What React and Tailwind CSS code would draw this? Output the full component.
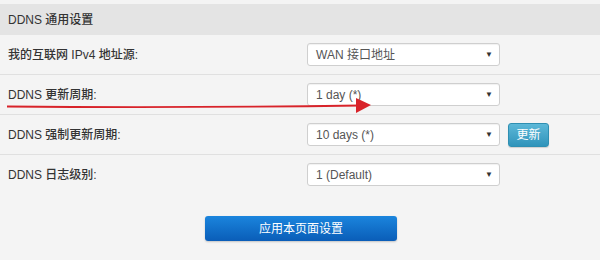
import React from 'react'

const font = { fontFamily: '"Liberation Sans", "Noto Sans CJK SC", sans-serif' }

function Select({ value }) {
  return (
    <div className="flex h-[23px] w-[193px] items-center justify-between rounded-[3px] border border-[#cfcfcf] bg-white pl-[8px] pr-[6px] shadow-[inset_0_1px_1px_rgba(0,0,0,0.06)]">
      <span className="text-[12px] text-[#555]">{value}</span>
      <span className="text-[8px] leading-none text-[#333]">▼</span>
    </div>
  )
}

function Row({ label, value, children }) {
  return (
    <div className="flex h-[40px] items-center border-b border-[#e0e0e0] pl-[8px]">
      <div className="w-[299px] text-[12px] font-medium text-[#333]">{label}</div>
      <Select value={value} />
      {children}
    </div>
  )
}

export default function App() {
  return (
    <div className="relative h-[260px] w-[600px] overflow-hidden bg-[#f4f4f4] pt-[4px]" style={font}>
      <div className="flex h-[31px] items-center bg-[#e4e4e4] pl-[8px] text-[12px] font-medium text-[#333]">
        DDNS 通用设置
      </div>

      <Row label="我的互联网 IPv4 地址源:" value="WAN 接口地址" />
      <Row label="DDNS 更新周期:" value="1 day (*)" />
      <Row label="DDNS 强制更新周期:" value="10 days (*)">
        <button className="ml-[8px] h-[24px] w-[41px] rounded-[3px] border border-[#2f8fb2] bg-gradient-to-b from-[#5cb8d8] to-[#2f94bb] text-[12px] text-white shadow-[0_1px_1px_rgba(0,0,0,0.15)]">
          更新
        </button>
      </Row>
      <div className="flex h-[39px] items-center pl-[8px]">
        <div className="w-[299px] text-[12px] font-medium text-[#333]">DDNS 日志级别:</div>
        <Select value="1 (Default)" />
      </div>

      <div className="flex justify-center pt-[22px] pl-[2px]">
        <button className="h-[25px] w-[192px] rounded-[3px] bg-gradient-to-b from-[#1b85dd] to-[#0a5db8] text-[12px] text-white shadow-[0_1px_2px_rgba(0,0,0,0.2)]">
          应用本页面设置
        </button>
      </div>

      <svg className="pointer-events-none absolute left-0 top-0" width="600" height="260">
        <path d="M7 106.5 Q 180 108 360 105.5" stroke="#d8232a" strokeWidth="1.8" fill="none" />
        <polygon points="356,98 371,105 356,113" fill="#d8232a" />
      </svg>
    </div>
  )
}
